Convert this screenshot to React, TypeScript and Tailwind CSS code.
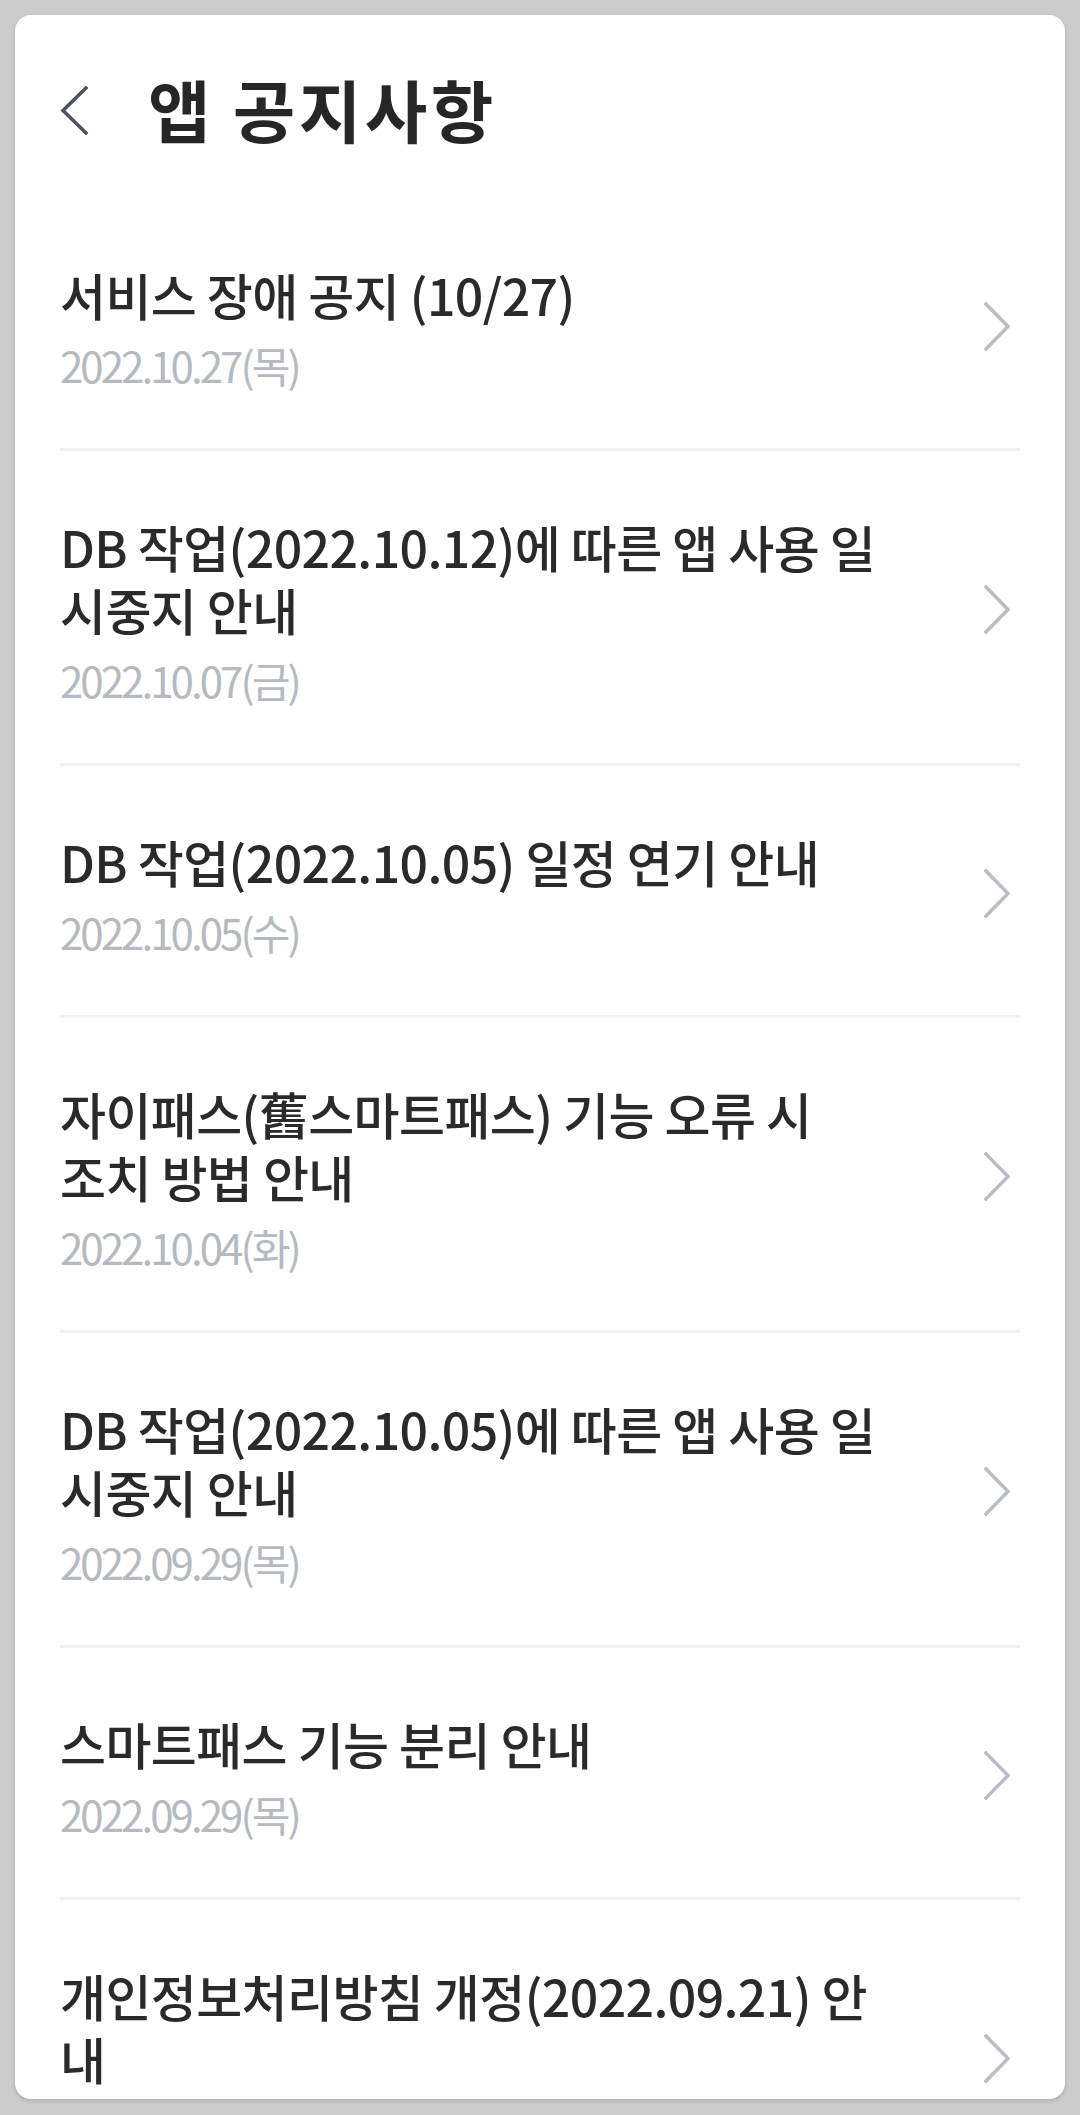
import React from 'react'

interface Notice {
  lines: string[]
  date: string
}

const notices: Notice[] = [
  { lines: ['서비스 장애 공지 (10/27)'], date: '2022.10.27(목)' },
  { lines: ['DB 작업(2022.10.12)에 따른 앱 사용 일', '시중지 안내'], date: '2022.10.07(금)' },
  { lines: ['DB 작업(2022.10.05) 일정 연기 안내'], date: '2022.10.05(수)' },
  { lines: ['자이패스(舊스마트패스) 기능 오류 시', '조치 방법 안내'], date: '2022.10.04(화)' },
  { lines: ['DB 작업(2022.10.05)에 따른 앱 사용 일', '시중지 안내'], date: '2022.09.29(목)' },
  { lines: ['스마트패스 기능 분리 안내'], date: '2022.09.29(목)' },
  { lines: ['개인정보처리방침 개정(2022.09.21) 안', '내'], date: '2022.09.21(수)' },
]

function BackIcon() {
  return (
    <svg width="28" height="49" viewBox="0 0 28 49" fill="none">
      <polyline points="26,2 3,24.5 26,47" stroke="#4d5263" strokeWidth="3.5" strokeLinecap="square" strokeLinejoin="miter" />
    </svg>
  )
}

function ChevronIcon() {
  return (
    <svg width="27" height="49" viewBox="0 0 27 49" fill="none">
      <polyline points="2,2 24,24.5 2,47" stroke="#b9bdc4" strokeWidth="3.5" strokeLinecap="square" strokeLinejoin="miter" />
    </svg>
  )
}

function NoticeRow({ notice, last }: { notice: Notice; last: boolean }) {
  return (
    <div>
      <div className="flex items-center pt-[64px] pb-[59px]">
        <div className="flex-1 min-w-0">
          {notice.lines.map((line, i) => (
            <div
              key={i}
              className="whitespace-nowrap text-[50px] leading-[63px] font-medium tracking-[-0.012em] text-[#2a2a2a]"
            >
              {line}
            </div>
          ))}
          <div className="mt-[15px] whitespace-nowrap text-[42px] leading-[48px] tracking-[-0.07em] text-[#b5b9c0]">
            {notice.date}
          </div>
        </div>
        <div className="mr-[9px] shrink-0">
          <ChevronIcon />
        </div>
      </div>
      {!last && <div className="h-[3px] bg-[#f1f1f1]" />}
    </div>
  )
}

export default function App() {
  return (
    <div
      className="min-h-[2115px] bg-[#cccccc] px-[15px] pt-[15px]"
      style={{ fontFamily: '"Noto Sans CJK KR", "Noto Sans", sans-serif' }}
    >
      <div className="h-[2084px] overflow-hidden rounded-[16px] bg-white px-[45px] shadow-[0_2px_4px_rgba(0,0,0,0.15)]">
        <div className="flex h-[184px] items-start pt-[54px]">
          <div className="flex h-[80px] items-center pt-[2px]">
            <BackIcon />
          </div>
          <h1 className="ml-[60px] text-[68px] leading-[80px] font-bold tracking-[0.05em] text-[#262626]">
            앱 공지사항
          </h1>
        </div>
        {notices.map((n, i) => (
          <NoticeRow key={i} notice={n} last={i === notices.length - 1} />
        ))}
      </div>
    </div>
  )
}
